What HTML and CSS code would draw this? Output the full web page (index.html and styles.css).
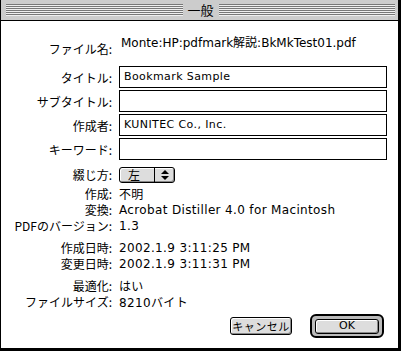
FILE: index.html
```html
<!DOCTYPE html>
<html lang="ja">
<head>
  <meta charset="UTF-8" />
  <title>一般</title>
  <link rel="stylesheet" href="styles.css">
</head>
<body>
  <div class="window">
    <div class="titlebar">
      <div class="stripes"></div>
      <span class="title">一般</span>
      <div class="stripes"></div>
    </div>

    <div class="content">
      <div class="row file">
        <span class="label">ファイル名:</span>
        <span class="value path">Monte:HP:pdfmark解説:BkMkTest01.pdf</span>
      </div>

      <div class="fields">
        <div class="row">
          <span class="label">タイトル:</span>
          <div class="field">Bookmark Sample</div>
        </div>
        <div class="row">
          <span class="label">サブタイトル:</span>
          <div class="field"></div>
        </div>
        <div class="row">
          <span class="label">作成者:</span>
          <div class="field">KUNITEC Co., Inc.</div>
        </div>
        <div class="row">
          <span class="label">キーワード:</span>
          <div class="field"></div>
        </div>
      </div>

      <div class="row popup-row">
        <span class="label">綴じ方:</span>
        <div class="popup">
          <span class="popup-text">左</span>
          <span class="popup-arrows">
            <svg width="8" height="10" viewBox="0 0 8 10">
              <path d="M4 0 L8 4 L0 4 Z M0 6 L8 6 L4 10 Z" fill="#000"/>
            </svg>
          </span>
        </div>
      </div>

      <div class="info">
        <div class="row"><span class="label">作成:</span><span class="value">不明</span></div>
        <div class="row"><span class="label">変換:</span><span class="value">Acrobat Distiller 4.0 for Macintosh</span></div>
        <div class="row"><span class="label">PDFのバージョン:</span><span class="value">1.3</span></div>
      </div>

      <div class="info">
        <div class="row"><span class="label">作成日時:</span><span class="value">2002.1.9 3:11:25 PM</span></div>
        <div class="row"><span class="label">変更日時:</span><span class="value">2002.1.9 3:11:31 PM</span></div>
      </div>

      <div class="info">
        <div class="row"><span class="label">最適化:</span><span class="value">はい</span></div>
        <div class="row"><span class="label">ファイルサイズ:</span><span class="value">8210バイト</span></div>
      </div>

      <div class="buttons">
        <button class="btn cancel">キャンセル</button>
        <div class="default-ring">
          <button class="btn ok">OK</button>
        </div>
      </div>
    </div>
  </div>
</body>
</html>
```

FILE: styles.css
```css
* {
  box-sizing: border-box;
}

body {
  margin: 0;
  background: #fff;
  font-family: "DejaVu Sans", "Noto Sans CJK JP", sans-serif;
  font-size: 12px;
  color: #000;
}

.window {
  width: 401px;
  height: 351px;
  border-left: 1px solid #000;
  border-right: 3px solid #000;
  border-bottom: 3px solid #000;
  display: flex;
  flex-direction: column;
}

/* Barra de titulo */
.titlebar {
  height: 21px;
  background: #ccc;
  border-bottom: 1px solid #000;
  display: flex;
  align-items: center;
  padding: 0 3px 0 5px;
}

.stripes {
  flex: 1;
  height: 12px;
  background: repeating-linear-gradient(#777 0 1px, #eee 1px 2px);
}

.title {
  padding: 0 5px;
  font-family: "Noto Sans CJK JP", sans-serif;
  font-size: 13px;
  line-height: 18px;
}

.content {
  flex: 1;
  padding: 12px 0 0 0;
}

.row {
  display: grid;
  grid-template-columns: 111px 1fr;
  column-gap: 7px;
  align-items: center;
}

.label {
  text-align: right;
  font-family: "Noto Sans CJK JP", sans-serif;
  white-space: nowrap;
}

.value {
  font-size: 12px;
  letter-spacing: 0.35px;
  white-space: nowrap;
}

.file {
  align-items: start;
}

.file .label {
  padding-top: 7px;
}

.path {
  padding-left: 2px;
  letter-spacing: 0;
}

.fields {
  margin-top: 9px;
  display: flex;
  flex-direction: column;
  gap: 2px;
}

.field {
  width: 268px;
  height: 22px;
  border: 1px solid #000;
  padding: 0 4px;
  line-height: 20px;
  font-size: 11px;
  letter-spacing: 0.4px;
}

.popup-row {
  margin-top: 6px;
}

.popup {
  width: 56px;
  height: 16px;
  border: 1px solid #000;
  border-radius: 3px;
  background: #ddd;
  box-shadow: inset 1px 1px 0 #fff, inset -1px -1px 0 #888;
  display: flex;
  align-items: center;
}

.popup-text {
  flex: 1;
  padding-left: 8px;
  font-family: "Noto Sans CJK JP", sans-serif;
  line-height: 14px;
}

.popup-arrows {
  width: 20px;
  height: 14px;
  border-left: 1px solid #000;
  display: flex;
  align-items: center;
  justify-content: center;
}

.info {
  margin-top: 2px;
}

.info + .info {
  margin-top: 6px;
}

.info .row {
  height: 16px;
}

.buttons {
  display: flex;
  justify-content: flex-end;
  align-items: center;
  gap: 18px;
  padding-right: 14px;
  margin-top: 5px;
}

.btn {
  height: 18px;
  padding: 0;
  border: 1px solid #000;
  border-radius: 3px;
  background: #ddd;
  box-shadow: inset 1px 1px 0 #fff, inset -1px -1px 0 #888;
  font-family: "Noto Sans CJK JP", sans-serif;
  font-size: 11px;
  line-height: 14px;
  color: #000;
}

.cancel {
  width: 62px;
  letter-spacing: 0.5px;
}

.default-ring {
  padding: 2px 3px;
  border: 2px solid #000;
  border-radius: 6px;
  background: #bbb;
}

.ok {
  width: 64px;
  height: 15px;
  line-height: 12px;
  font-family: "DejaVu Sans", sans-serif;
}
```
